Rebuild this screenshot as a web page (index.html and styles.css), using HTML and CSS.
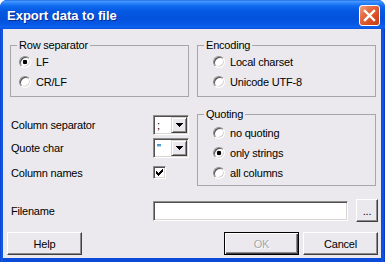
FILE: index.html
```html
<!DOCTYPE html>
<html lang="en">
  <head>
    <meta charset="utf-8">
    <title>Export data to file</title>
    <link rel="stylesheet" href="styles.css">
  </head>
  <body>
    <div class="window">
      <div class="titlebar">
        <span class="title">Export data to file</span>
        <button class="close" type="button" aria-label="Close">
          <svg width="13" height="13" viewBox="0 0 13 13"><path d="M2 2L11 11M11 2L2 11" stroke="#fff" stroke-width="2.4" stroke-linecap="square"/></svg>
        </button>
      </div>
      <form class="content" method="get" action="#">
        <div class="groups">
          <fieldset class="group">
            <legend>Row separator</legend>
            <div class="opts near">
              <label class="opt"><input type="radio" class="radio" name="rowsep" checked> LF</label>
              <label class="opt"><input type="radio" class="radio" name="rowsep"> CR/LF</label>
            </div>
          </fieldset>
          <fieldset class="group">
            <legend>Encoding</legend>
            <div class="opts">
              <label class="opt"><input type="radio" class="radio" name="enc"> Local charset</label>
              <label class="opt"><input type="radio" class="radio" name="enc"> Unicode UTF-8</label>
            </div>
          </fieldset>
        </div>

        <div class="middle">
          <div class="fields">
            <label>Column separator</label>
            <div class="combo"><span class="combo-val">;</span><span class="drop"><svg width="7" height="4" viewBox="0 0 7 4"><path d="M0 0h7v1H0zM1 1h5v1H1zM2 2h3v1H2zM3 3h1v1H3z"/></svg></span></div>
            <label>Quote char</label>
            <div class="combo"><span class="combo-val">"</span><span class="drop"><svg width="7" height="4" viewBox="0 0 7 4"><path d="M0 0h7v1H0zM1 1h5v1H1zM2 2h3v1H2zM3 3h1v1H3z"/></svg></span></div>
            <label class="last">Column names</label>
            <span class="check last"><svg width="7" height="7" viewBox="0 0 7 7"><path d="M6 0h1v1H6zM5 1h2v1H5zM0 2h1v1H0zM4 2h3v1H4zM0 3h2v1H0zM3 3h3v1H3zM0 4h5v1H0zM1 5h3v1H1zM2 6h1v1H2z"/></svg></span>
          </div>
          <fieldset class="group quoting">
            <legend>Quoting</legend>
            <div class="opts">
              <label class="opt"><input type="radio" class="radio" name="quote"> no quoting</label>
              <label class="opt"><input type="radio" class="radio" name="quote" checked> only strings</label>
              <label class="opt"><input type="radio" class="radio" name="quote"> all columns</label>
            </div>
          </fieldset>
        </div>

        <div class="file-row">
          <label for="filename">Filename</label>
          <input type="text" id="filename" class="textbox">
          <button type="button" class="btn browse">...</button>
        </div>

        <div class="buttons">
          <button type="button" class="btn">Help</button>
          <span class="spacer"></span>
          <button type="button" class="btn default" disabled>OK</button>
          <button type="button" class="btn">Cancel</button>
        </div>
      </form>
    </div>
  </body>
</html>
```

FILE: styles.css
```css
html {
  margin: 0;
  padding: 0;
}
body {
  margin: 0;
  background-color: #fff;
  font: 11px "Liberation Sans", Arial, sans-serif;
  letter-spacing: -0.2px;
  color: #000;
}
.window {
  width: 385px;
  height: 262px;
  display: flex;
  flex-direction: column;
  background: linear-gradient(to right, #0a3fcf, #1560ea 2px, #0a4ad8 3px, #0a4ad8 381px, #1259e4 383px, #0833c4);
  border-radius: 7px 7px 0 0;
  overflow: hidden;
}
.titlebar {
  flex: none;
  height: 29px;
  box-sizing: border-box;
  display: flex;
  align-items: center;
  padding: 2px 5px 0 7px;
  background: linear-gradient(to bottom, #0a5be0 0, #4a9cff 1px, #2f86fc 3px, #0f6af0 6px, #0559e3 11px, #0452dc 18px, #0657e4 24px, #0c62ef 27px, #0a52dc 29px);
}
.title {
  flex: 1;
  color: #fff;
  font: bold 13px "Liberation Sans", Arial, sans-serif;
  letter-spacing: 0;
  text-shadow: 1px 1px #0b2a93;
}
.close {
  width: 21px;
  height: 21px;
  padding: 0;
  display: flex;
  align-items: center;
  justify-content: center;
  border: 1px solid #fff;
  border-radius: 3px;
  background: linear-gradient(135deg, #f4a282 0%, #e4693f 35%, #d84c22 70%, #c33c14 100%);
}
.content {
  flex: 1;
  margin: 0 4px 4px 3px;
  padding: 10px 3px 0 4px;
  background: #ebe9ed;
  display: flex;
  flex-direction: column;
}
.groups {
  display: flex;
  gap: 8px;
  margin: 0 2px 0 3px;
}
.group {
  width: 179px;
  height: 58px;
  box-sizing: border-box;
  min-width: 0;
  margin: 0;
  padding: 0 0 0 6px;
  border: 1px solid #a7a6ab;
}
.group legend {
  padding: 0 2px;
  line-height: 13px;
}
.opts {
  padding-left: 9px;
}
.opts.near {
  padding-left: 2px;
}
.opt {
  display: flex;
  align-items: center;
  gap: 5px;
  height: 20px;
}
.radio {
  appearance: none;
  width: 12px;
  height: 12px;
  margin: 0;
  box-sizing: border-box;
  border-radius: 50%;
  border: 1px solid;
  border-color: #8c8c8c #fff #fff #8c8c8c;
  box-shadow: inset 1px 1px #505050, inset -1px -1px #d8d6d2;
  background: #fff;
}
.radio:checked {
  background: radial-gradient(circle, #000 0 2px, #fff 2.6px);
}
.middle {
  display: flex;
  gap: 8px;
  margin: 11px 2px 0 3px;
}
.fields {
  width: 179px;
  box-sizing: border-box;
  padding: 7px 0 0 1px;
  display: grid;
  grid-template-columns: 142px 36px;
  grid-template-rows: 20px 20px 20px;
  row-gap: 3px;
  align-content: start;
  align-items: center;
}
.fields .last {
  margin-top: 3px;
}
.combo {
  width: 36px;
  height: 20px;
  box-sizing: border-box;
  display: flex;
  padding: 1px;
  border: 1px solid;
  border-color: #8c8c8c #fff #fff #8c8c8c;
  box-shadow: inset 1px 1px #505050, inset -1px -1px #d8d6d2;
  background: #fff;
}
.combo-val {
  flex: 1;
  padding-left: 2px;
  line-height: 16px;
  color: #000;
}
.drop {
  width: 16px;
  height: 16px;
  box-sizing: border-box;
  display: flex;
  align-items: center;
  justify-content: center;
  border: 1px solid;
  border-color: #d8d6d2 #404040 #404040 #d8d6d2;
  box-shadow: inset 1px 1px #fff, inset -1px -1px #8c8c8c;
  background: #ebe9ed;
}
.check {
  width: 13px;
  height: 13px;
  box-sizing: border-box;
  display: flex;
  align-items: center;
  justify-content: center;
  border: 1px solid;
  border-color: #8c8c8c #fff #fff #8c8c8c;
  box-shadow: inset 1px 1px #505050, inset -1px -1px #d8d6d2;
  background: #fff;
}
.quoting {
  height: 78px;
  padding-top: 2px;
}
.file-row {
  display: flex;
  align-items: center;
  height: 23px;
  margin: 13px 0 0 3px;
}
.file-row label {
  flex: 0 0 143px;
  box-sizing: border-box;
  padding-left: 1px;
}
.textbox {
  width: 195px;
  height: 20px;
  box-sizing: border-box;
  margin: 0 8px 0 0;
  border: 1px solid;
  border-color: #8c8c8c #fff #fff #8c8c8c;
  box-shadow: inset 1px 1px #505050, inset -1px -1px #d8d6d2;
  background: #fff;
}
.btn {
  width: 75px;
  height: 23px;
  box-sizing: border-box;
  padding: 0;
  font: 11px "Liberation Sans", Arial, sans-serif;
  letter-spacing: -0.2px;
  color: #000;
  background: #ebe9ed;
  border: 1px solid;
  border-color: #fff #404040 #404040 #fff;
  box-shadow: inset -1px -1px #8c8c8c;
}
.browse {
  width: 22px;
  line-height: 14px;
}
.buttons {
  display: flex;
  margin-top: 10px;
}
.spacer {
  flex: 1;
}
.default {
  margin-right: 4px;
  border-color: #000;
  box-shadow: inset 1px 1px #fff, inset -1px -1px #404040, inset -2px -2px #8c8c8c;
  color: #a8a7ab;
  text-shadow: 1px 1px #fff;
}
```
